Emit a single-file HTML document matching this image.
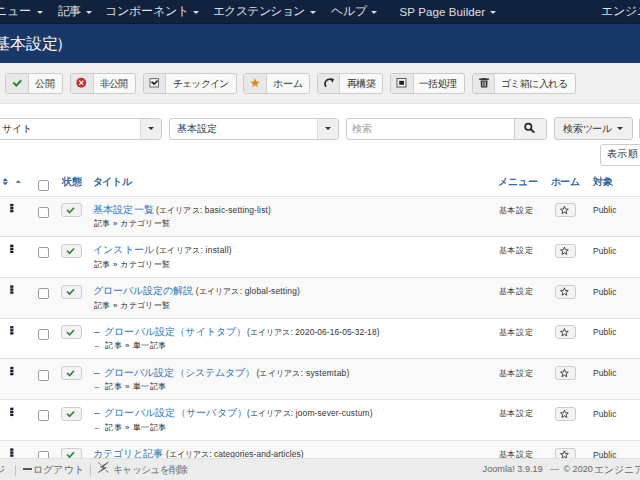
<!DOCTYPE html>
<html><head><meta charset="utf-8">
<style>
*{box-sizing:border-box;margin:0;padding:0}
html,body{width:640px;height:480px;overflow:hidden;background:#fff;font-family:"Liberation Sans",sans-serif;color:#333}
.a{position:absolute;white-space:nowrap}
.tx{position:absolute;white-space:nowrap;line-height:1}
#nav{position:absolute;left:0;top:0;width:640px;height:24px;background:#11223f;border-bottom:1px solid #0d1a31}
.nt{color:#dcdcdc}
.cr{position:absolute;width:0;height:0;border-left:3px solid transparent;border-right:3px solid transparent;border-top:3.5px solid #e0e0e0}
#hdr{position:absolute;left:0;top:24px;width:640px;height:39px;background:#1a3867}
#tb{position:absolute;left:0;top:63px;width:640px;height:41px;background:#f0f0f0;border-bottom:1px solid #e2e2e2}
.btn{position:absolute;top:73px;height:21px;border:1px solid #cbcbcb;border-radius:3px;background:#f9f9f9}
.btn .ic{position:absolute;left:0;top:0;height:19px;background:#e8e8e8;border-right:1px solid #d2d2d2;border-radius:2px 0 0 2px}
.box{position:absolute;border:1px solid #ccc;border-radius:3px;background:#fff}
.th{color:#2f649c;font-weight:bold}
.rw{position:absolute;left:0;width:640px;border-top:1px solid #e2e2e2}
.odd{background:#f9f9f9}
.cb{position:absolute;left:38px;width:11px;height:11px;border:1px solid #9c9c9c;border-radius:2px;background:#fff}
.pb{position:absolute;left:60.5px;width:21px;height:14px;border:1px solid #cdcdcd;border-radius:3px;background:#f3f3f3}
.ti{color:#2a69b3}
#ft{position:absolute;left:0;top:458px;width:640px;height:22px;background:#ececec;border-top:1px solid #e0e0e0}
.fx{color:#666}
</style></head><body>
<div id="nav"></div>
<div id="n1" class="tx" style="left:-17.00px;top:4.5px;font-size:12px;letter-spacing:0.000px;color:#e0e0e0">メニュー</div>
<div class="cr" style="left:36.5px;top:10.5px"></div>
<div id="n2" class="tx" style="left:57.50px;top:4.5px;font-size:12px;letter-spacing:-0.500px;color:#e0e0e0">記事</div>
<div class="cr" style="left:85.5px;top:10.5px"></div>
<div id="n3" class="tx" style="left:105.00px;top:4.5px;font-size:12px;letter-spacing:0.000px;color:#e0e0e0">コンポーネント</div>
<div class="cr" style="left:192.5px;top:10.5px"></div>
<div id="n4" class="tx" style="left:212.75px;top:4.5px;font-size:12px;letter-spacing:-0.465px;color:#e0e0e0">エクステンション</div>
<div class="cr" style="left:309.5px;top:10.5px"></div>
<div id="n5" class="tx" style="left:331.00px;top:4.5px;font-size:12px;letter-spacing:0.000px;color:#e0e0e0">ヘルプ</div>
<div class="cr" style="left:370.5px;top:10.5px"></div>
<div id="n7" class="tx" style="left:601.00px;top:4.5px;font-size:12px;letter-spacing:0.000px;color:#e0e0e0">エンジニア</div>
<div id="n6" class="tx" style="left:399.50px;top:6.5px;font-size:11.5px;letter-spacing:0.107px;color:#e0e0e0">SP Page Builder</div>
<div class="cr" style="left:489.5px;top:10.5px"></div>
<div id="hdr"></div>
<div id="h1" class="tx" style="left:-22.50px;top:36px;font-size:16px;letter-spacing:0.000px;color:#fff">（基本設定</div>
<div id="h2" class="tx" style="left:56.00px;top:36px;font-size:16px;letter-spacing:0.000px;color:#fff">）</div>
<div id="tb"></div>
<div class="btn" style="left:5px;width:58px"><span class="ic" style="width:23px"></span></div>
<div id="b0" class="tx" style="left:34.50px;top:79px;font-size:10px;letter-spacing:0.500px;">公開</div>
<div class="btn" style="left:70px;width:66px"><span class="ic" style="width:23px"></span></div>
<div id="b1" class="tx" style="left:100.00px;top:79px;font-size:10px;letter-spacing:-1.000px;">非公開</div>
<div class="btn" style="left:143px;width:94px"><span class="ic" style="width:22px"></span></div>
<div id="b2" class="tx" style="left:173.00px;top:79px;font-size:10px;letter-spacing:-0.800px;">チェックイン</div>
<div class="btn" style="left:243px;width:67px"><span class="ic" style="width:23px"></span></div>
<div id="b3" class="tx" style="left:272.50px;top:79px;font-size:10px;letter-spacing:0.000px;">ホーム</div>
<div class="btn" style="left:317px;width:66px"><span class="ic" style="width:22px"></span></div>
<div id="b4" class="tx" style="left:347.00px;top:79px;font-size:10px;letter-spacing:-0.750px;">再構築</div>
<div class="btn" style="left:390px;width:75px"><span class="ic" style="width:23px"></span></div>
<div id="b5" class="tx" style="left:418.50px;top:79px;font-size:10px;letter-spacing:-0.334px;">一括処理</div>
<div class="btn" style="left:472px;width:104px"><span class="ic" style="width:22px"></span></div>
<div id="b6" class="tx" style="left:500.50px;top:79px;font-size:10px;letter-spacing:-0.500px;">ゴミ箱に入れる</div>
<div class="box" style="left:-4px;top:118px;width:166px;height:22px"></div>
<div class="a" style="left:140px;top:119px;width:21px;height:20px;background:#efefef;border-left:1px solid #ddd;border-radius:0 2px 2px 0"></div>
<div class="cr" style="left:148px;top:127px;border-top-color:#333;border-left-width:3px;border-right-width:3px"></div>
<div id="f1" class="tx" style="left:1.50px;top:124px;font-size:10px;letter-spacing:0.000px;">サイト</div>
<div class="box" style="left:169px;top:118px;width:170px;height:22px"></div>
<div class="a" style="left:317px;top:119px;width:21px;height:20px;background:#efefef;border-left:1px solid #ddd;border-radius:0 2px 2px 0"></div>
<div class="cr" style="left:325px;top:127px;border-top-color:#333;border-left-width:3px;border-right-width:3px"></div>
<div id="f2" class="tx" style="left:176.50px;top:124px;font-size:10px;letter-spacing:0.333px;">基本設定</div>
<div class="box" style="left:346px;top:118px;width:201px;height:22px"></div>
<div class="a" style="left:514px;top:119px;width:32px;height:20px;background:#f0f0f0;border-left:1px solid #ccc;border-radius:0 2px 2px 0"></div>
<div id="f3" class="tx" style="left:352.00px;top:124px;font-size:10px;letter-spacing:-0.250px;color:#999">検索</div>
<div class="box" style="left:554px;top:117px;width:79px;height:23px;background:#f0f0f0;border-color:#c8c8c8"></div>
<div id="f4" class="tx" style="left:563.25px;top:124px;font-size:10px;letter-spacing:-0.310px;">検索ツール</div>
<div class="cr" style="left:617px;top:127px;border-top-color:#333;border-left-width:3px;border-right-width:3px"></div>
<div class="box" style="left:639px;top:117px;width:20px;height:23px;background:#f0f0f0"></div>
<div class="box" style="left:600px;top:144px;width:60px;height:22px"></div>
<div id="f5" class="tx" style="left:607.00px;top:149px;font-size:10px;letter-spacing:0.375px;">表示順</div>
<div class="cb" style="top:179.5px"></div>
<div id="t1" class="tx" style="left:61.50px;top:177px;font-size:10px;letter-spacing:0.000px;color:#3669a3;font-weight:bold">状態</div>
<div id="t2" class="tx" style="left:92.50px;top:177px;font-size:10px;letter-spacing:-0.083px;color:#3669a3;font-weight:bold">タイトル</div>
<div id="t3" class="tx" style="left:497.50px;top:177px;font-size:10px;letter-spacing:0.082px;color:#3669a3;font-weight:bold">メニュー</div>
<div id="t4" class="tx" style="left:550.50px;top:177px;font-size:10px;letter-spacing:-0.375px;color:#3669a3;font-weight:bold">ホーム</div>
<div id="t5" class="tx" style="left:593.00px;top:177px;font-size:10px;letter-spacing:-0.500px;color:#3669a3;font-weight:bold">対象</div>
<div class="rw odd" style="top:196px;height:40px"></div>
<div class="cb" style="top:206.50px"></div>
<div class="pb" style="top:203.10px"></div>
<div id="r0t" class="tx" style="left:92.50px;top:204.5px;font-size:10px;letter-spacing:0.250px;color:#3270b6">基本設定一覧</div>
<div id="r0a" class="tx" style="left:156.00px;top:205.5px;font-size:8.4px;letter-spacing:0.174px;">(エイリアス: basic-setting-list)</div>
<div id="r0s" class="tx" style="left:94.00px;top:220.0px;font-size:8px;letter-spacing:0.300px;color:#222">記事 » カテゴリー覧</div>
<div id="r0m" class="tx" style="left:498.50px;top:206.5px;font-size:8px;letter-spacing:0.749px;">基本設定</div>
<div class="pb" style="left:555px;top:203.10px"></div>
<div id="r0p" class="tx" style="left:593.00px;top:206.0px;font-size:8.4px;letter-spacing:0.150px;">Public</div>
<div class="rw" style="top:236px;height:41px"></div>
<div class="cb" style="top:247.25px"></div>
<div class="pb" style="top:243.85px"></div>
<div id="r1t" class="tx" style="left:93.00px;top:245.25px;font-size:10px;letter-spacing:0.200px;color:#3270b6">インストール</div>
<div id="r1a" class="tx" style="left:156.00px;top:246.25px;font-size:8.4px;letter-spacing:0.267px;">(エイリアス: install)</div>
<div id="r1s" class="tx" style="left:94.00px;top:260.75px;font-size:8px;letter-spacing:0.300px;color:#222">記事 » カテゴリー覧</div>
<div id="r1m" class="tx" style="left:498.50px;top:247.25px;font-size:8px;letter-spacing:0.749px;">基本設定</div>
<div class="pb" style="left:555px;top:243.85px"></div>
<div id="r1p" class="tx" style="left:593.00px;top:246.75px;font-size:8.4px;letter-spacing:0.150px;">Public</div>
<div class="rw odd" style="top:277px;height:41px"></div>
<div class="cb" style="top:288.00px"></div>
<div class="pb" style="top:284.60px"></div>
<div id="r2t" class="tx" style="left:93.00px;top:286.0px;font-size:10px;letter-spacing:0.000px;color:#3270b6">グローバル設定の解説</div>
<div id="r2a" class="tx" style="left:195.80px;top:287.0px;font-size:8.4px;letter-spacing:0.181px;">(エイリアス: global-setting)</div>
<div id="r2s" class="tx" style="left:94.00px;top:301.5px;font-size:8px;letter-spacing:0.300px;color:#222">記事 » カテゴリー覧</div>
<div id="r2m" class="tx" style="left:498.50px;top:288.0px;font-size:8px;letter-spacing:0.749px;">基本設定</div>
<div class="pb" style="left:555px;top:284.60px"></div>
<div id="r2p" class="tx" style="left:593.00px;top:287.5px;font-size:8.4px;letter-spacing:0.150px;">Public</div>
<div class="rw" style="top:318px;height:40px"></div>
<div class="cb" style="top:328.75px"></div>
<div class="pb" style="top:325.35px"></div>
<div class="tx" style="left:94px;top:326.75px;font-size:10px;color:#2a69b3">–</div>
<div id="r3t" class="tx" style="left:104.20px;top:326.75px;font-size:10px;letter-spacing:0.155px;color:#3270b6">グローバル設定（サイトタブ）</div>
<div id="r3a" class="tx" style="left:247.00px;top:327.75px;font-size:8.4px;letter-spacing:0.113px;">(エイリアス: 2020-06-16-05-32-18)</div>
<div class="tx" style="left:94.5px;top:342.25px;font-size:8px">–</div>
<div id="r3s" class="tx" style="left:105.20px;top:342.25px;font-size:8px;letter-spacing:0.500px;color:#222">記事 » 単一記事</div>
<div id="r3m" class="tx" style="left:498.50px;top:328.75px;font-size:8px;letter-spacing:0.749px;">基本設定</div>
<div class="pb" style="left:555px;top:325.35px"></div>
<div id="r3p" class="tx" style="left:593.00px;top:328.25px;font-size:8.4px;letter-spacing:0.150px;">Public</div>
<div class="rw odd" style="top:358px;height:41px"></div>
<div class="cb" style="top:369.50px"></div>
<div class="pb" style="top:366.10px"></div>
<div class="tx" style="left:94px;top:367.50px;font-size:10px;color:#2a69b3">–</div>
<div id="r4t" class="tx" style="left:104.00px;top:367.5px;font-size:10px;letter-spacing:0.072px;color:#3270b6">グローバル設定（システムタブ）</div>
<div id="r4a" class="tx" style="left:256.40px;top:368.5px;font-size:8.4px;letter-spacing:0.264px;">(エイリアス: systemtab)</div>
<div class="tx" style="left:94.5px;top:383.00px;font-size:8px">–</div>
<div id="r4s" class="tx" style="left:105.20px;top:383.0px;font-size:8px;letter-spacing:0.500px;color:#222">記事 » 単一記事</div>
<div id="r4m" class="tx" style="left:498.50px;top:369.5px;font-size:8px;letter-spacing:0.749px;">基本設定</div>
<div class="pb" style="left:555px;top:366.10px"></div>
<div id="r4p" class="tx" style="left:593.00px;top:369.0px;font-size:8.4px;letter-spacing:0.150px;">Public</div>
<div class="rw" style="top:399px;height:41px"></div>
<div class="cb" style="top:410.25px"></div>
<div class="pb" style="top:406.85px"></div>
<div class="tx" style="left:94px;top:408.25px;font-size:10px;color:#2a69b3">–</div>
<div id="r5t" class="tx" style="left:104.00px;top:408.25px;font-size:10px;letter-spacing:0.231px;color:#3270b6">グローバル設定（サーバタブ）</div>
<div id="r5a" class="tx" style="left:247.00px;top:409.25px;font-size:8.4px;letter-spacing:0.160px;">(エイリアス: joom-sever-custum)</div>
<div class="tx" style="left:94.5px;top:423.75px;font-size:8px">–</div>
<div id="r5s" class="tx" style="left:105.20px;top:423.75px;font-size:8px;letter-spacing:0.500px;color:#222">記事 » 単一記事</div>
<div id="r5m" class="tx" style="left:498.50px;top:410.25px;font-size:8px;letter-spacing:0.749px;">基本設定</div>
<div class="pb" style="left:555px;top:406.85px"></div>
<div id="r5p" class="tx" style="left:593.00px;top:409.75px;font-size:8.4px;letter-spacing:0.150px;">Public</div>
<div class="rw odd" style="top:440px;height:41px"></div>
<div class="cb" style="top:451.00px"></div>
<div class="pb" style="top:447.60px"></div>
<div id="r6t" class="tx" style="left:92.50px;top:449.0px;font-size:10px;letter-spacing:0.043px;color:#3270b6">カテゴリと記事</div>
<div id="r6a" class="tx" style="left:166.00px;top:450.0px;font-size:8.4px;letter-spacing:0.081px;">(エイリアス: categories-and-articles)</div>
<div id="r6m" class="tx" style="left:498.50px;top:451.0px;font-size:8px;letter-spacing:0.749px;">基本設定</div>
<div class="pb" style="left:555px;top:447.60px"></div>
<div id="r6p" class="tx" style="left:593.00px;top:450.5px;font-size:8.4px;letter-spacing:0.150px;">Public</div>
<svg class="a" style="left:0;top:0" width="640" height="480" viewBox="0 0 640 480">
<path d="M13.3 82.6 L16.3 85.6 L21.2 80.3" fill="none" stroke="#2c8a3a" stroke-width="2.1"/>
<circle cx="81.25" cy="82.75" r="4.9" fill="#c0302b"/><path d="M79.2 80.7 L83.3 84.8 M83.3 80.7 L79.2 84.8" stroke="#fff" stroke-width="1.2"/>
<rect x="150" y="78.7" width="8.6" height="8.3" fill="#fafafa" stroke="#5a5a5a" stroke-width="0.9"/><path d="M151.6 81.6 L154 84 L157.6 80.6" fill="none" stroke="#222" stroke-width="1.7"/>
<path d="M255 78.3 L256.3 81.6 L259.6 81.8 L257 84 L257.9 87.2 L255 85.3 L252.1 87.2 L253 84 L250.4 81.8 L253.7 81.6 Z" fill="#e08a12"/>
<path d="M326.05 86.69 A4.5 4.5 0 0 1 331.04 79.57" fill="none" stroke="#222" stroke-width="1.5"/><path d="M329.9 78.1 L334.1 78.9 L332.4 82.7 Z" fill="#222"/>
<rect x="397" y="78.5" width="9" height="8.5" fill="#fafafa" stroke="#555" stroke-width="1"/><rect x="399.2" y="80.8" width="4.8" height="4" fill="#222"/>
<path d="M479.2 79.2 L488.8 79.2" stroke="#333" stroke-width="1.6"/><path d="M482.5 78.5 L485.5 78.5" stroke="#333" stroke-width="1"/><path d="M480.6 80.5 L487.6 80.5 L487.2 87.5 L481 87.5 Z" fill="#333"/><path d="M482.7 81.5 V86.5 M484.1 81.5 V86.5 M485.5 81.5 V86.5" stroke="#ddd" stroke-width="0.7"/>
<circle cx="528.3" cy="126.8" r="3.2" fill="none" stroke="#222" stroke-width="1.6"/><path d="M530.6 129.2 L534.4 132.6" stroke="#222" stroke-width="1.9"/>
<path d="M2.5 181.2 L5.25 178 L8 181.2 Z M2.5 182.3 L5.25 185.3 L8 182.3 Z" fill="#2a6ab0"/>
<path d="M15.5 182.8 L18.25 180.2 L21 182.8 Z" fill="#2a6ab0"/>
<rect x="10.2" y="203.90" width="3.2" height="2.4" fill="#1a1a2a"/><rect x="10.2" y="206.90" width="3.2" height="2.4" fill="#1a1a2a"/><rect x="10.2" y="209.90" width="3.2" height="2.4" fill="#1a1a2a"/>
<path d="M67 210.00 L69.6 212.50 L74 207.80" fill="none" stroke="#2b8239" stroke-width="1.65"/>
<path d="M564.40 206.30 L565.43 208.98 L568.30 209.13 L566.06 210.94 L566.81 213.72 L564.40 212.15 L561.99 213.72 L562.74 210.94 L560.50 209.13 L563.37 208.98 Z" fill="none" stroke="#3a3a3a" stroke-width="0.9" stroke-linejoin="round"/>
<rect x="10.2" y="244.65" width="3.2" height="2.4" fill="#1a1a2a"/><rect x="10.2" y="247.65" width="3.2" height="2.4" fill="#1a1a2a"/><rect x="10.2" y="250.65" width="3.2" height="2.4" fill="#1a1a2a"/>
<path d="M67 250.75 L69.6 253.25 L74 248.55" fill="none" stroke="#2b8239" stroke-width="1.65"/>
<path d="M564.40 247.05 L565.43 249.73 L568.30 249.88 L566.06 251.69 L566.81 254.47 L564.40 252.90 L561.99 254.47 L562.74 251.69 L560.50 249.88 L563.37 249.73 Z" fill="none" stroke="#3a3a3a" stroke-width="0.9" stroke-linejoin="round"/>
<rect x="10.2" y="285.40" width="3.2" height="2.4" fill="#1a1a2a"/><rect x="10.2" y="288.40" width="3.2" height="2.4" fill="#1a1a2a"/><rect x="10.2" y="291.40" width="3.2" height="2.4" fill="#1a1a2a"/>
<path d="M67 291.50 L69.6 294.00 L74 289.30" fill="none" stroke="#2b8239" stroke-width="1.65"/>
<path d="M564.40 287.80 L565.43 290.48 L568.30 290.63 L566.06 292.44 L566.81 295.22 L564.40 293.65 L561.99 295.22 L562.74 292.44 L560.50 290.63 L563.37 290.48 Z" fill="none" stroke="#3a3a3a" stroke-width="0.9" stroke-linejoin="round"/>
<rect x="10.2" y="326.15" width="3.2" height="2.4" fill="#1a1a2a"/><rect x="10.2" y="329.15" width="3.2" height="2.4" fill="#1a1a2a"/><rect x="10.2" y="332.15" width="3.2" height="2.4" fill="#1a1a2a"/>
<path d="M67 332.25 L69.6 334.75 L74 330.05" fill="none" stroke="#2b8239" stroke-width="1.65"/>
<path d="M564.40 328.55 L565.43 331.23 L568.30 331.38 L566.06 333.19 L566.81 335.97 L564.40 334.40 L561.99 335.97 L562.74 333.19 L560.50 331.38 L563.37 331.23 Z" fill="none" stroke="#3a3a3a" stroke-width="0.9" stroke-linejoin="round"/>
<rect x="10.2" y="366.90" width="3.2" height="2.4" fill="#1a1a2a"/><rect x="10.2" y="369.90" width="3.2" height="2.4" fill="#1a1a2a"/><rect x="10.2" y="372.90" width="3.2" height="2.4" fill="#1a1a2a"/>
<path d="M67 373.00 L69.6 375.50 L74 370.80" fill="none" stroke="#2b8239" stroke-width="1.65"/>
<path d="M564.40 369.30 L565.43 371.98 L568.30 372.13 L566.06 373.94 L566.81 376.72 L564.40 375.15 L561.99 376.72 L562.74 373.94 L560.50 372.13 L563.37 371.98 Z" fill="none" stroke="#3a3a3a" stroke-width="0.9" stroke-linejoin="round"/>
<rect x="10.2" y="407.65" width="3.2" height="2.4" fill="#1a1a2a"/><rect x="10.2" y="410.65" width="3.2" height="2.4" fill="#1a1a2a"/><rect x="10.2" y="413.65" width="3.2" height="2.4" fill="#1a1a2a"/>
<path d="M67 413.75 L69.6 416.25 L74 411.55" fill="none" stroke="#2b8239" stroke-width="1.65"/>
<path d="M564.40 410.05 L565.43 412.73 L568.30 412.88 L566.06 414.69 L566.81 417.47 L564.40 415.90 L561.99 417.47 L562.74 414.69 L560.50 412.88 L563.37 412.73 Z" fill="none" stroke="#3a3a3a" stroke-width="0.9" stroke-linejoin="round"/>
<rect x="10.2" y="448.40" width="3.2" height="2.4" fill="#1a1a2a"/><rect x="10.2" y="451.40" width="3.2" height="2.4" fill="#1a1a2a"/><rect x="10.2" y="454.40" width="3.2" height="2.4" fill="#1a1a2a"/>
<path d="M67 454.50 L69.6 457.00 L74 452.30" fill="none" stroke="#2b8239" stroke-width="1.65"/>
<path d="M564.40 450.80 L565.43 453.48 L568.30 453.63 L566.06 455.44 L566.81 458.22 L564.40 456.65 L561.99 458.22 L562.74 455.44 L560.50 453.63 L563.37 453.48 Z" fill="none" stroke="#3a3a3a" stroke-width="0.9" stroke-linejoin="round"/>
</svg>
<div id="ft"></div>
<div id="x0" class="tx" style="left:-5.25px;top:465px;font-size:10px;letter-spacing:0.000px;color:#666">ジ</div>
<div class="a" style="left:14.5px;top:464.5px;width:1px;height:11px;background:#c4c4c4"></div>
<div class="a" style="left:23px;top:468px;width:9px;height:2px;background:#555"></div>
<div id="x1" class="tx" style="left:32.80px;top:465px;font-size:10px;letter-spacing:0.250px;color:#666">ログアウト</div>
<div class="a" style="left:90px;top:464.5px;width:1px;height:11px;background:#c4c4c4"></div>
<div id="x2" class="tx" style="left:113.00px;top:465px;font-size:10px;letter-spacing:-0.643px;color:#666">キャッシュを削除</div>
<div id="x3" class="tx" style="left:482.60px;top:465px;font-size:9.1px;letter-spacing:0.037px;color:#666">Joomla! 3.9.19</div>
<div id="x4" class="tx" style="left:550.00px;top:465px;font-size:9.1px;letter-spacing:0.000px;color:#666">—</div>
<div id="x5" class="tx" style="left:563.40px;top:465px;font-size:9.1px;letter-spacing:0.000px;color:#666">© 2020</div>
<div id="x6" class="tx" style="left:593.80px;top:465px;font-size:10px;letter-spacing:0.000px;color:#666">エンジニア</div>
<svg class="a" style="left:0;top:0" width="640" height="480"><path d="M108.5 462 L100.2 467 L104 467.6 L98 472.7 L106.4 467.8 L102.6 467.2 Z" fill="#555" stroke="#555" stroke-width="0.5" stroke-linejoin="round"/><path d="M98.2 462.3 L100.9 465.1 M105.8 470 L108.4 472.6" stroke="#666" stroke-width="1"/></svg>
</body></html>
